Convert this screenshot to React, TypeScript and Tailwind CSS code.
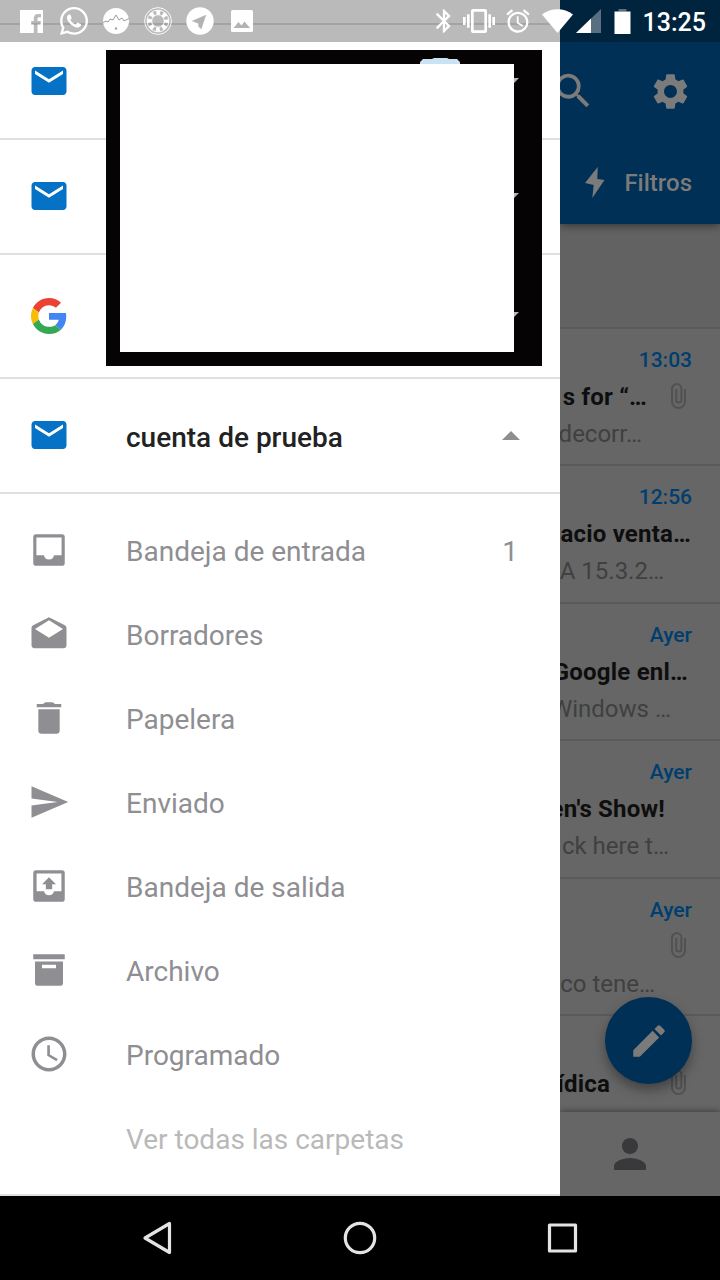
import type { ReactNode } from 'react';
import clsx from 'clsx';
import { MdAccessTime, MdAlarm, MdBluetooth, MdEdit, MdMail, MdPerson, MdSearch, MdSend, MdSettings, MdVibration } from 'react-icons/md';
import { FaWhatsapp } from 'react-icons/fa';

type Folder = {
  label: string;
  icon: ReactNode;
  count?: number;
};

type Message = {
  time?: string;
  title?: string;
  titleInset?: string;
  preview?: string;
  previewInset?: string;
  attachment?: boolean;
};

const glyph = 'h-[42px] w-[42px] fill-current';

const folders: Folder[] = [
  {
    label: 'Bandeja de entrada',
    count: 1,
    icon: (
      <svg viewBox="0 0 24 24" className={glyph}>
        <path fillRule="evenodd" d="M4.6 3h14.8A1.6 1.6 0 0 1 21 4.6v14.8a1.6 1.6 0 0 1-1.6 1.6H4.6A1.6 1.6 0 0 1 3 19.4V4.6A1.6 1.6 0 0 1 4.6 3zM4.8 4.9V15h4.3a2.95 2.95 0 0 0 5.8 0h4.3V4.9z" />
      </svg>
    ),
  },
  {
    label: 'Borradores',
    icon: (
      <svg viewBox="0 0 24 24" className={glyph}>
        <path d="M21.99 8.7c0-.72-.37-1.35-.94-1.7L12 2.4 2.95 7C2.38 7.35 2 7.98 2 8.7v9.7c0 1.1.9 1.7 1.7 1.7h16.6c1 0 1.7-.7 1.7-1.7l-.01-9.7zM12 14.2 4 9.1l8-4.9 8 4.9-8 5.1z" />
      </svg>
    ),
  },
  {
    label: 'Papelera',
    icon: (
      <svg viewBox="0 0 24 24" className={glyph}>
        <path d="M5.900 7h12.200v12.300c0 1-.8 1.700-1.700 1.700H7.600c-.9 0-1.700-.7-1.700-1.700zM5 4h3.600c.7-.7 1.100-1 2-1h2.800c.9 0 1.300.3 2 1H19v1.900H5z" />
      </svg>
    ),
  },
  { label: 'Enviado', icon: <MdSend className={glyph} /> },
  {
    label: 'Bandeja de salida',
    icon: (
      <svg viewBox="0 0 24 24" className={glyph}>
        <path fillRule="evenodd" d="M4.6 3h14.8A1.6 1.6 0 0 1 21 4.6v14.8a1.6 1.6 0 0 1-1.6 1.6H4.6A1.6 1.6 0 0 1 3 19.4V4.6A1.6 1.6 0 0 1 4.6 3zM4.9 4.9V15h4.3a2.85 2.85 0 0 0 5.6 0h4.3V4.9z" />
        <path d="M12 7l4 4h-2.200v2.900h-3.600V11H8z" />
      </svg>
    ),
  },
  {
    label: 'Archivo',
    icon: (
      <svg viewBox="0 0 24 24" className={glyph}>
        <path fillRule="evenodd" d="M3 3h18v2.900H3zM4 7.100h16v12.300a1.600 1.600 0 0 1-1.600 1.600H5.600A1.600 1.600 0 0 1 4 19.400zM8 9v2h8V9z" />
      </svg>
    ),
  },
  { label: 'Programado', icon: <MdAccessTime className={glyph} /> },
];

const messages: Message[] = [
  { time: '13:03', title: 's for “…', titleInset: 'pr-[24px]', preview: 'decorr…', previewInset: 'pr-[50px]', attachment: true },
  { time: '12:56', title: 'acio venta…', titleInset: 'pr-[1px]', preview: 'A 15.3.2…', previewInset: 'pr-[28px]' },
  { time: 'Ayer', title: 'Google enl…', titleInset: 'pr-[4px]', preview: 'Windows …', previewInset: 'pr-[21px]' },
  { time: 'Ayer', title: "en's Show!", titleInset: 'pr-[27px]', preview: 'ck here t…', previewInset: 'pr-[23px]' },
  { time: 'Ayer', preview: 'co tene…', previewInset: 'pr-[37px]', attachment: true },
  { title: 'ídica', titleInset: 'pr-[61px]', attachment: true },
];

function StatusBar() {
  return (
    <div className="absolute inset-x-0 top-0 z-20 flex h-[42px] items-center bg-black/27 text-white">
      <div className="flex items-center pl-[10.5px] *:flex *:w-[42px] *:justify-center">
        <span>
          <svg viewBox="0 0 23 23" className="h-[23px] w-[23px]">
            <path fill="currentColor" d="M0 0h23v23h-5.500v-8.500h3l.4-3.500h-3.400V9c0-1 .4-1.700 1.700-1.700H21V4h-3c-3 0-4.200 1.900-4.200 4.500V11h-2.600v3.500h2.600V23H0z" />
          </svg>
        </span>
        <span>
          <FaWhatsapp className="h-[32px] w-[32px]" />
        </span>
        <span>
          <svg viewBox="0 0 26 26" className="h-[26px] w-[26px]">
            <circle cx="13" cy="13" r="13" fill="currentColor" />
            <path d="M0 14.500l3-1.500 2 1 2-3 3 1 3-5 3 5 3-2 2 3 5-2.500" fill="none" stroke="#9c9c9c" strokeWidth="1" />
            <circle cx="13" cy="20.500" r="1.300" fill="#aaa" />
          </svg>
        </span>
        <span>
          <svg viewBox="0 0 28 28" className="h-[28px] w-[28px]" fill="none" stroke="currentColor">
            <circle cx="14" cy="14" r="13.400" strokeWidth="0.900" />
            <circle cx="14" cy="14" r="10.900" strokeWidth="0.900" />
            <circle cx="14" cy="14" r="8.500" strokeWidth="4.600" strokeDasharray="3.700 2.975" strokeDashoffset="1.850" />
            <circle cx="14" cy="14" r="6.300" strokeWidth="1" />
          </svg>
        </span>
        <span>
          <svg viewBox="0 0 28 28" className="h-[28px] w-[28px]">
            <circle cx="14" cy="14" r="13.700" fill="currentColor" />
            <path d="M5.800 14 20.200 7.800 15.300 22.200 12.300 19.500V16.500z" fill="#b3b3b3" />
          </svg>
        </span>
        <span>
          <svg viewBox="0 0 22 22" className="h-[22px] w-[22px]">
            <rect width="22" height="22" rx="1.500" fill="currentColor" />
            <path d="M2.500 18l5-6 3 3.500 3-4 5.500 6.500z" fill="#b3b3b3" />
          </svg>
        </span>
      </div>

      <div className="ml-auto flex items-center pr-[14px]">
        <MdBluetooth className="h-[28px] w-[28px]" />
        <MdVibration className="ml-[5px] h-[32px] w-[32px]" />
        <MdAlarm className="ml-[9px] h-[28px] w-[28px]" />
        <svg viewBox="0 0 31 24" className="ml-[10px] h-[24px] w-[31px]">
          <path d="M0 5.500C9-1.500 22-1.500 31 5.500L15.500 24z" fill="currentColor" />
        </svg>
        <svg viewBox="0 0 25 24" className="ml-[3px] h-[24px] w-[25px]">
          <path d="M25 0v24H0z" fill="currentColor" opacity="0.350" />
          <path d="M15 9.600V24H0z" fill="currentColor" />
        </svg>
        <svg viewBox="0 0 17 25" className="ml-[13px] h-[25px] w-[17px]">
          <path d="M4.500 0h8v2.500h-8z" fill="currentColor" opacity="0.350" />
          <path d="M0.500 2.500h16V25h-16z" fill="currentColor" />
        </svg>
        <span className="ml-[12px] pt-[2px] text-[25px] leading-none font-medium">13:25</span>
      </div>
    </div>
  );
}

function GoogleLogo() {
  return (
    <svg viewBox="0 0 48 48" className="mx-[3px] mb-px h-[36px] w-[36px]">
      <path fill="#EA4335" d="M24 9.500c3.540 0 6.710 1.220 9.210 3.600l6.850-6.850C35.900 2.380 30.470 0 24 0 14.620 0 6.510 5.380 2.560 13.220l7.980 6.190C12.430 13.720 17.740 9.500 24 9.500z" />
      <path fill="#4285F4" d="M46.980 24.550c0-1.570-.15-3.090-.38-4.550H24v9.020h12.940c-.58 2.960-2.260 5.480-4.780 7.180l7.730 6c4.510-4.180 7.090-10.360 7.090-17.650z" />
      <path fill="#FBBC05" d="M10.530 28.590c-.48-1.450-.76-2.990-.76-4.590s.27-3.140.76-4.590l-7.980-6.190C.92 16.460 0 20.120 0 24c0 3.880.92 7.540 2.560 10.780l7.970-6.190z" />
      <path fill="#34A853" d="M24 48c6.480 0 11.930-2.130 15.890-5.810l-7.730-6c-2.150 1.450-4.920 2.300-8.160 2.300-6.260 0-11.570-4.220-13.470-9.910l-7.980 6.190C6.510 42.620 14.620 48 24 48z" />
    </svg>
  );
}

function Mail() {
  return <MdMail className="mb-px h-[42px] w-[42px] text-[#0572c6]" />;
}

function Paperclip() {
  return (
    <svg viewBox="0 0 15 26" className="mb-1 mr-[6px] h-[26px] w-[15px] shrink-0" fill="none" stroke="#515151" strokeWidth="2">
      <path d="M14 6v12.500a6.500 6.500 0 0 1-13 0V5.800a4.700 4.700 0 0 1 9.400 0V17a2.600 2.600 0 0 1-5.200 0V6" />
    </svg>
  );
}

function Drawer() {
  return (
    <aside className="relative flex w-[560px] shrink-0 flex-col bg-white">
      <div className="h-[25px] border-b-2 border-[#e0e0e0]" />
      <div className="flex h-[115px] items-center border-b-2 border-[#e0e0e0] pl-[28px]">
        <Mail />
      </div>
      <div className="flex h-[115px] items-center border-b-2 border-[#e0e0e0] pl-[28px]">
        <Mail />
      </div>
      <div className="flex h-[124px] items-center border-b-2 border-[#e0e0e0] pl-[28px]">
        <GoogleLogo />
      </div>
      <div className="flex h-[115px] items-center border-b-2 border-[#e0e0e0] pr-[40px] pl-[28px]">
        <Mail />
        <span className="ml-[56px] pt-[5px] text-[28px] font-medium text-[#222]">cuenta de prueba</span>
        <svg viewBox="0 0 18 9" className="mb-px ml-auto h-[9px] w-[18px]">
          <path d="M0 9 9 0l9 9z" fill="#8e8e8e" />
        </svg>
      </div>

      <nav className="flex grow flex-col border-b-2 border-[#e0e0e0] pt-[15px] text-[28px] text-[#8e8e93]">
        {folders.map((folder) => (
          <div key={folder.label} className="flex h-[84px] items-center pr-[42px] pl-[28px]">
            <span className="mb-[3px]">{folder.icon}</span>
            <span className="ml-[56px] pt-[2px]">{folder.label}</span>
            {folder.count && <span className="ml-auto pt-[2px]">{folder.count}</span>}
          </div>
        ))}
        <div className="flex h-[84px] items-center pt-[2px] pl-[126px] text-[#b9b9b9]">Ver todas las carpetas</div>
      </nav>

      {/* redaction box over the account names */}
      <div className="absolute top-[50px] left-[106px] h-[316px] w-[436px] border-14 border-r-28 border-[#050304] bg-white">
        <svg viewBox="0 0 40 6" className="absolute -top-[6px] left-[300px] h-[6px] w-[40px]">
          <path d="M0 6V4l3-3h9l2-1h13l2 1h8l3 3v2z" fill="#cbe2f5" />
        </svg>
        <svg viewBox="0 0 5 240" className="absolute top-[14px] -right-[5px] h-[240px] w-[5px]" fill="#b5b5b5">
          <path d="M0 0h5L0 5zM0 115h5l-5 5zM0 234h5l-5 5z" />
        </svg>
      </div>
    </aside>
  );
}

function MessageRow({ message }: { message: Message }) {
  return (
    <div className="flex h-[137.4px] shrink-0 flex-col border-b-2 border-[#5a5a5a] pt-[13px] pr-[28px] text-[24px] leading-[37px] whitespace-nowrap">
      <div className="flex h-[37px] justify-end text-[21px] font-medium text-[#003e70]">{message.time}</div>
      <div className="flex h-[37px] items-center justify-end font-bold tracking-[0.2px] text-[#0e0e0e]">
        <span className={clsx(message.titleInset)}>{message.title}</span>
        {message.attachment && <Paperclip />}
      </div>
      <div className={clsx('flex h-[37px] justify-end text-[#404040]', message.previewInset)}>{message.preview}</div>
    </div>
  );
}

function MailScreen() {
  return (
    <main className="relative flex w-[160px] flex-col overflow-hidden bg-[#666]">
      <header className="z-10 h-[224px] shrink-0 bg-[#003056] pt-[68px] text-[#7b7b7b] shadow-[0_2px_8px_rgba(0,0,0,0.45)]">
        <div className="flex items-center justify-between pr-[28px]">
          <MdSearch className="-ml-[10px] h-[46px] w-[46px] shrink-0" />
          <MdSettings className="h-[43px] w-[43px]" />
        </div>
        <div className="mt-[48px] flex items-center justify-end pr-[28px] leading-[40px]">
          <svg viewBox="0 0 20 31" className="mr-[19px] h-[31px] w-[20px]" fill="currentColor">
            <path d="M12.700 0 0 16l8.700 2-1.400 13L19.500 13l-7.200-1z" />
          </svg>
          <span className="pt-px text-[24px] font-medium">Filtros</span>
        </div>
      </header>
      <div className="h-[105px] shrink-0 border-b-2 border-[#5a5a5a] bg-[#626262]" />

      <div className="flex grow flex-col overflow-hidden">
        {messages.map((message, index) => (
          <MessageRow key={index} message={message} />
        ))}
      </div>

      <footer className="flex h-[84px] shrink-0 items-center bg-[#666] pl-[46px] shadow-[0_-1px_6px_rgba(0,0,0,0.4)]">
        <MdPerson className="h-[48px] w-[48px] text-[#39393b]" />
      </footer>

      <button className="absolute right-[28px] bottom-[112px] flex h-[87px] w-[87px] items-center justify-center rounded-full bg-[#003056] shadow-[0_6px_12px_rgba(0,0,0,0.35)]">
        <MdEdit className="h-[42px] w-[42px] text-[#7b7b7b]" />
      </button>
    </main>
  );
}

function NavigationBar() {
  return (
    <div className="flex h-[84px] items-center justify-between bg-black pr-[142px] pl-[141px] text-[#e4e4e4]">
      <svg viewBox="0 0 32 34" className="h-[34px] w-[32px]" fill="none" stroke="currentColor" strokeWidth="3.200" strokeLinejoin="round">
        <path d="M28.500 2.500v29L4 17z" />
      </svg>
      <svg viewBox="0 0 34 34" className="h-[34px] w-[34px]" fill="none" stroke="currentColor" strokeWidth="3.200">
        <circle cx="17" cy="17" r="14.700" />
      </svg>
      <svg viewBox="0 0 32 32" className="h-[32px] w-[32px]" fill="none" stroke="currentColor" strokeWidth="3.200" strokeLinejoin="round">
        <path d="M3.500 3h26v26h-26z" />
      </svg>
    </div>
  );
}

export default function App() {
  return (
    <div className="relative flex h-[1280px] w-[720px] flex-col overflow-hidden bg-black font-[Roboto,sans-serif]">
      <StatusBar />
      <div className="flex h-[1196px]">
        <Drawer />
        <MailScreen />
      </div>
      <NavigationBar />
    </div>
  );
}
